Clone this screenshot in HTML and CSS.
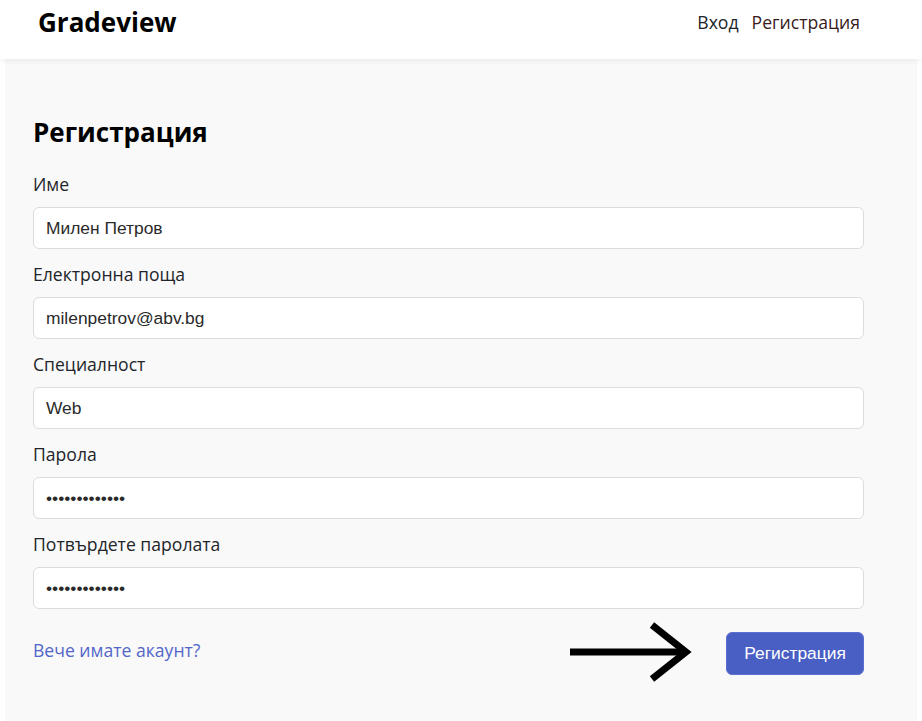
FILE: index.html
```html
<!DOCTYPE html>
<html lang="bg">
<head>
<meta charset="utf-8">
<title>Gradeview</title>
<link rel="stylesheet" href="styles.css">
</head>
<body>
<header class="topbar">
  <div class="brand">Gradeview</div>
  <nav class="nav">
    <a href="#" class="nav-link">Вход</a>
    <a href="#" class="nav-link nav-active">Регистрация</a>
  </nav>
</header>
<main class="panel">
  <h1 class="title">Регистрация</h1>
  <form class="form">
    <div class="field">
      <label class="label">Име</label>
      <input class="input" type="text" value="Милен Петров">
    </div>
    <div class="field">
      <label class="label">Електронна поща</label>
      <input class="input" type="text" value="milenpetrov@abv.bg">
    </div>
    <div class="field">
      <label class="label">Специалност</label>
      <input class="input" type="text" value="Web">
    </div>
    <div class="field">
      <label class="label">Парола</label>
      <input class="input" type="password" value="1234567890123">
    </div>
    <div class="field">
      <label class="label">Потвърдете паролата</label>
      <input class="input" type="password" value="1234567890123">
    </div>
    <div class="actions">
      <a href="#" class="login-link">Вече имате акаунт?</a>
      <div class="submit-wrap">
        <svg class="arrow" width="124" height="64" viewBox="0 0 124 64">
          <path d="M0 31 H114" stroke="#000" stroke-width="7" fill="none"/>
          <path d="M82 4 L116 31 L82 58" stroke="#000" stroke-width="7" stroke-linejoin="miter" fill="none"/>
        </svg>
        <button type="button" class="btn">Регистрация</button>
      </div>
    </div>
  </form>
</main>
</body>
</html>
```
FILE: styles.css
```css
html, body {
  margin: 0;
  padding: 0;
  background: #ffffff;
}
body {
  font-family: "Open Sans", "Noto Sans", sans-serif;
  color: #212529;
  min-height: 721px;
  display: flex;
  flex-direction: column;
}
.topbar {
  height: 59px;
  box-sizing: border-box;
  display: flex;
  align-items: center;
  justify-content: space-between;
  padding: 0 62px 15px 38px;
  background: #fff;
  position: relative;
  z-index: 2;
  box-shadow: 0 2px 6px rgba(0,0,0,0.06);
}
.brand {
  font-weight: 700;
  font-size: 26px;
  color: #000;
}
.nav {
  display: flex;
  gap: 13px;
}
.nav-link {
  font-size: 17.6px;
  color: #212529;
  text-decoration: none;
}
.nav-active {
  color: #3a1b1b;
}
.panel {
  flex: 1;
  margin: 0 5px;
  background: #f9f9f9;
  padding: 56px 53px 0 28px;
}
.title {
  margin: 0 0 21px;
  font-size: 26px;
  line-height: 35px;
  font-weight: 700;
  color: #000;
}
.form {
  display: flex;
  flex-direction: column;
}
.field {
  display: flex;
  flex-direction: column;
  margin-bottom: 12px;
}
.label {
  font-size: 17.6px;
  line-height: 26px;
  margin-bottom: 10px;
  color: #212529;
}
.input {
  height: 42px;
  box-sizing: border-box;
  border: 1px solid #dcdcdc;
  border-radius: 6px;
  background: #fff;
  padding: 0 12px;
  font-family: "Liberation Sans", Arial, sans-serif;
  font-size: 17.4px;
  color: #2a2a2a;
  outline: none;
}
.actions {
  display: flex;
  align-items: center;
  justify-content: space-between;
}
.login-link {
  font-size: 17.6px;
  color: #5266c8;
  text-decoration: none;
  margin-bottom: 7px;
}
.submit-wrap {
  display: flex;
  align-items: center;
  gap: 32px;
}
.arrow {
  display: block;
}
.btn {
  height: 43px;
  width: 138px;
  border: 1px solid #5b6fd0;
  border-radius: 6px;
  background: #4a5fc4;
  color: #fff;
  font-family: "Liberation Sans", Arial, sans-serif;
  font-size: 17.4px;
}
```
